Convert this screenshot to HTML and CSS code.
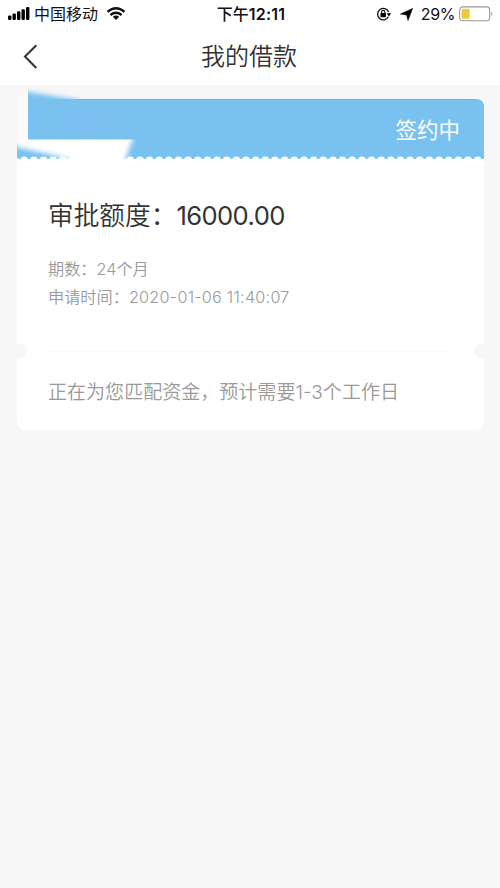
FILE: index.html
```html
<!DOCTYPE html>
<html lang="zh-CN">
<head>
<meta charset="utf-8">
<title>我的借款</title>
<link rel="stylesheet" href="styles.css">
</head>
<body>
<header class="top">
  <div class="status">
    <div class="status-left">
      <svg class="signal" width="22" height="14" viewBox="0 0 22 14"><rect x="0" y="8.5" width="3.4" height="4.5" rx="1.2"/><rect x="4.5" y="6.5" width="3.4" height="6.5" rx="1.2"/><rect x="9" y="4.3" width="3.4" height="8.7" rx="1.2"/><rect x="13.5" y="2.3" width="3.4" height="10.7" rx="1.2"/><rect x="18" y="0" width="3.4" height="13" rx="1.2"/></svg>
      <span class="carrier">中国移动</span>
      <svg class="wifi" width="20" height="14" viewBox="0 0 20 14"><path d="M1.5 4.8Q10-2.2 18.5 4.8M4.4 8Q10 3.6 15.6 8" fill="none" stroke="#111" stroke-width="2.3"/><path d="M6.8 9.8Q10 7.2 13.2 9.8L10 13Z" fill="#111"/></svg>
    </div>
    <div class="clock">下午<span>12:11</span></div>
    <div class="status-right">
      <svg class="lock" width="16" height="14" viewBox="0 0 16 14"><path d="M12.4 9.8A5.7 5.7 0 1 1 12.6 5" fill="none" stroke="#111" stroke-width="1.3"/><path d="M10.6 6.3h4.6L12.9 9.6Z"/><rect x="4.5" y="6.1" width="5.4" height="4.2" rx=".5"/><path d="M5.6 6.5V5a1.6 1.6 0 0 1 3.2 0v1.5" fill="none" stroke="#111" stroke-width="1.1"/></svg>
      <svg class="arrow" width="13" height="13" viewBox="0 0 13 13"><path d="M12.6.4 8 12.6 6.6 7 .4 6.1Z" stroke="#111" stroke-width=".6" stroke-linejoin="round"/></svg>
      <span class="percent">29%</span>
      <svg class="battery" width="35" height="16" viewBox="0 0 35 16"><rect x=".7" y=".9" width="30" height="13.8" rx="3.2" fill="#fff" stroke="#999" stroke-width="1.1"/><rect x="2.7" y="2.8" width="8" height="10" rx="1.3" fill="#eacb3c"/><path d="M32.3 5.5q2.2 2.3 0 4.6Z" fill="#999"/></svg>
    </div>
  </div>
  <nav class="nav">
    <svg class="back" width="15" height="26" viewBox="0 0 15 26"><path d="M13.3 1.2 2 12.6 13.3 24" fill="none" stroke="#333" stroke-width="2.1"/></svg>
    <h1 class="title">我的借款</h1>
  </nav>
</header>
<main class="content">
  <section class="card">
    <div class="banner">
      <svg class="banner-art" width="467" height="76" viewBox="0 0 467 76">
        <defs>
          <filter id="soft" x="-20%" y="-50%" width="140%" height="200%"><feGaussianBlur stdDeviation="2.5"/></filter>
          <clipPath id="white-patch"><path d="M0 54.5H140V76H0Z"/></clipPath>
          <clipPath id="edge"><path d="M11 0H100V16H11Z"/></clipPath>
          <pattern id="scallops" x="2.3" y="71" width="9.65" height="9" patternUnits="userSpaceOnUse"><circle cx="4.8" cy="4.3" r="3.9" fill="#fff"/></pattern>
        </defs>
        <path d="M0 14H459Q467 14 467 22V74H0Z" fill="#79c2f0"/>
        <path d="M60 14.6H459" fill="none" stroke="#74b5dc"/>
        <path d="M0 10H11V56H0Z" fill="#fcfbfa"/>
        <g clip-path="url(#edge)"><path d="M0 5L62 15V22H0Z" fill="#79c2f0" filter="url(#soft)"/></g>
        <ellipse cx="67" cy="39" rx="28" ry="12" fill="#7dbcef" opacity=".55" filter="url(#soft)"/>
        <g clip-path="url(#white-patch)"><path d="M-10 48H118L107 78H62L40 71 0 62Z" fill="#fff" filter="url(#soft)"/></g>
        <rect x="0" y="71" width="467" height="5" fill="url(#scallops)"/>
      </svg>
      <span class="state">签约中</span>
    </div>
    <div class="details">
      <p class="amount"><span>审批额度：</span><span class="amount-value">16000.00</span></p>
      <p class="row"><span>期数：</span><span class="term">24</span>个月</p>
      <p class="row"><span>申请时间：</span><span class="date">2020-01-06 11:40:07</span></p>
    </div>
    <div class="divider"></div>
    <p class="notice">正在为您匹配资金，预计需要<span class="days">1-3</span>个工作日</p>
  </section>
</main>
</body>
</html>
```
FILE: styles.css
```css
* { box-sizing: border-box; }
body {
  margin: 0;
  background: #f7f7f7;
  color: #333;
  font-family: Inter, "Noto Sans CJK SC", sans-serif;
  overflow: hidden;
}
svg { display: block; flex: none; }
h1, p { margin: 0; font-weight: 350; }
.top { height: 85px; background: #fff; }
.status {
  display: grid;
  grid-template-columns: 1fr auto 1fr;
  height: 28px;
  padding: 0 6px 0 8px;
  color: #111;
  font-size: 16px;
  line-height: 28px;
}
.status-left, .status-right { display: flex; align-items: center; }
.status-right { justify-content: flex-end; }
.carrier { margin: 0 8px 0 4px; }
.clock { font-weight: 500; white-space: nowrap; }
.clock span { font-weight: 600; font-size: 16px; letter-spacing: .2px; }
.lock { margin-right: 8px; }
.arrow { margin-right: 8px; }
.percent { margin-right: 4px; letter-spacing: -.4px; }
.nav {
  display: grid;
  grid-template-columns: 24px 1fr 24px;
  align-items: center;
  height: 57px;
  padding: 0 25px 0 23px;
}
.title { font-size: 24px; line-height: 56px; text-align: center; }
.content { padding: 0 16px 0 17px; }
.card {
  height: 345px;
  border-radius: 0 0 9px 9px;
  background: linear-gradient(#f7f7f7 14px, #fff 14px);
}
.banner { display: grid; height: 76px; }
.banner-art, .state { grid-area: 1 / 1; }
.state {
  justify-self: end;
  z-index: 1;
  padding: 29px 24px 0 0;
  color: #fff;
  font-size: 21.5px;
  font-weight: 400;
  line-height: 32px;
}
.details { height: 190px; padding: 36px 31px 0; white-space: nowrap; }
.amount { margin-bottom: 20px; font-size: 25.7px; line-height: 38px; }
.amount-value { font-size: 25.6px; font-weight: 400; letter-spacing: -.6px; }
.row { color: #999; font-size: 16.2px; line-height: 28px; }
.date { letter-spacing: .25px; }
.divider {
  height: 1px;
  background:
    linear-gradient(#fafafa, #fafafa) center / 404px 1px no-repeat;
  position: relative;
}
.divider::before, .divider::after {
  content: "";
  position: absolute;
  top: -7px;
  width: 10px;
  height: 14px;
  background: #f7f7f7;
}
.divider::before { left: 0; border-radius: 0 7px 7px 0; }
.divider::after { right: 0; border-radius: 7px 0 0 7px; }
.notice {
  padding: 25px 31px 0;
  color: #999;
  font-size: 19.05px;
  line-height: 32px;
  white-space: nowrap;
}
```
